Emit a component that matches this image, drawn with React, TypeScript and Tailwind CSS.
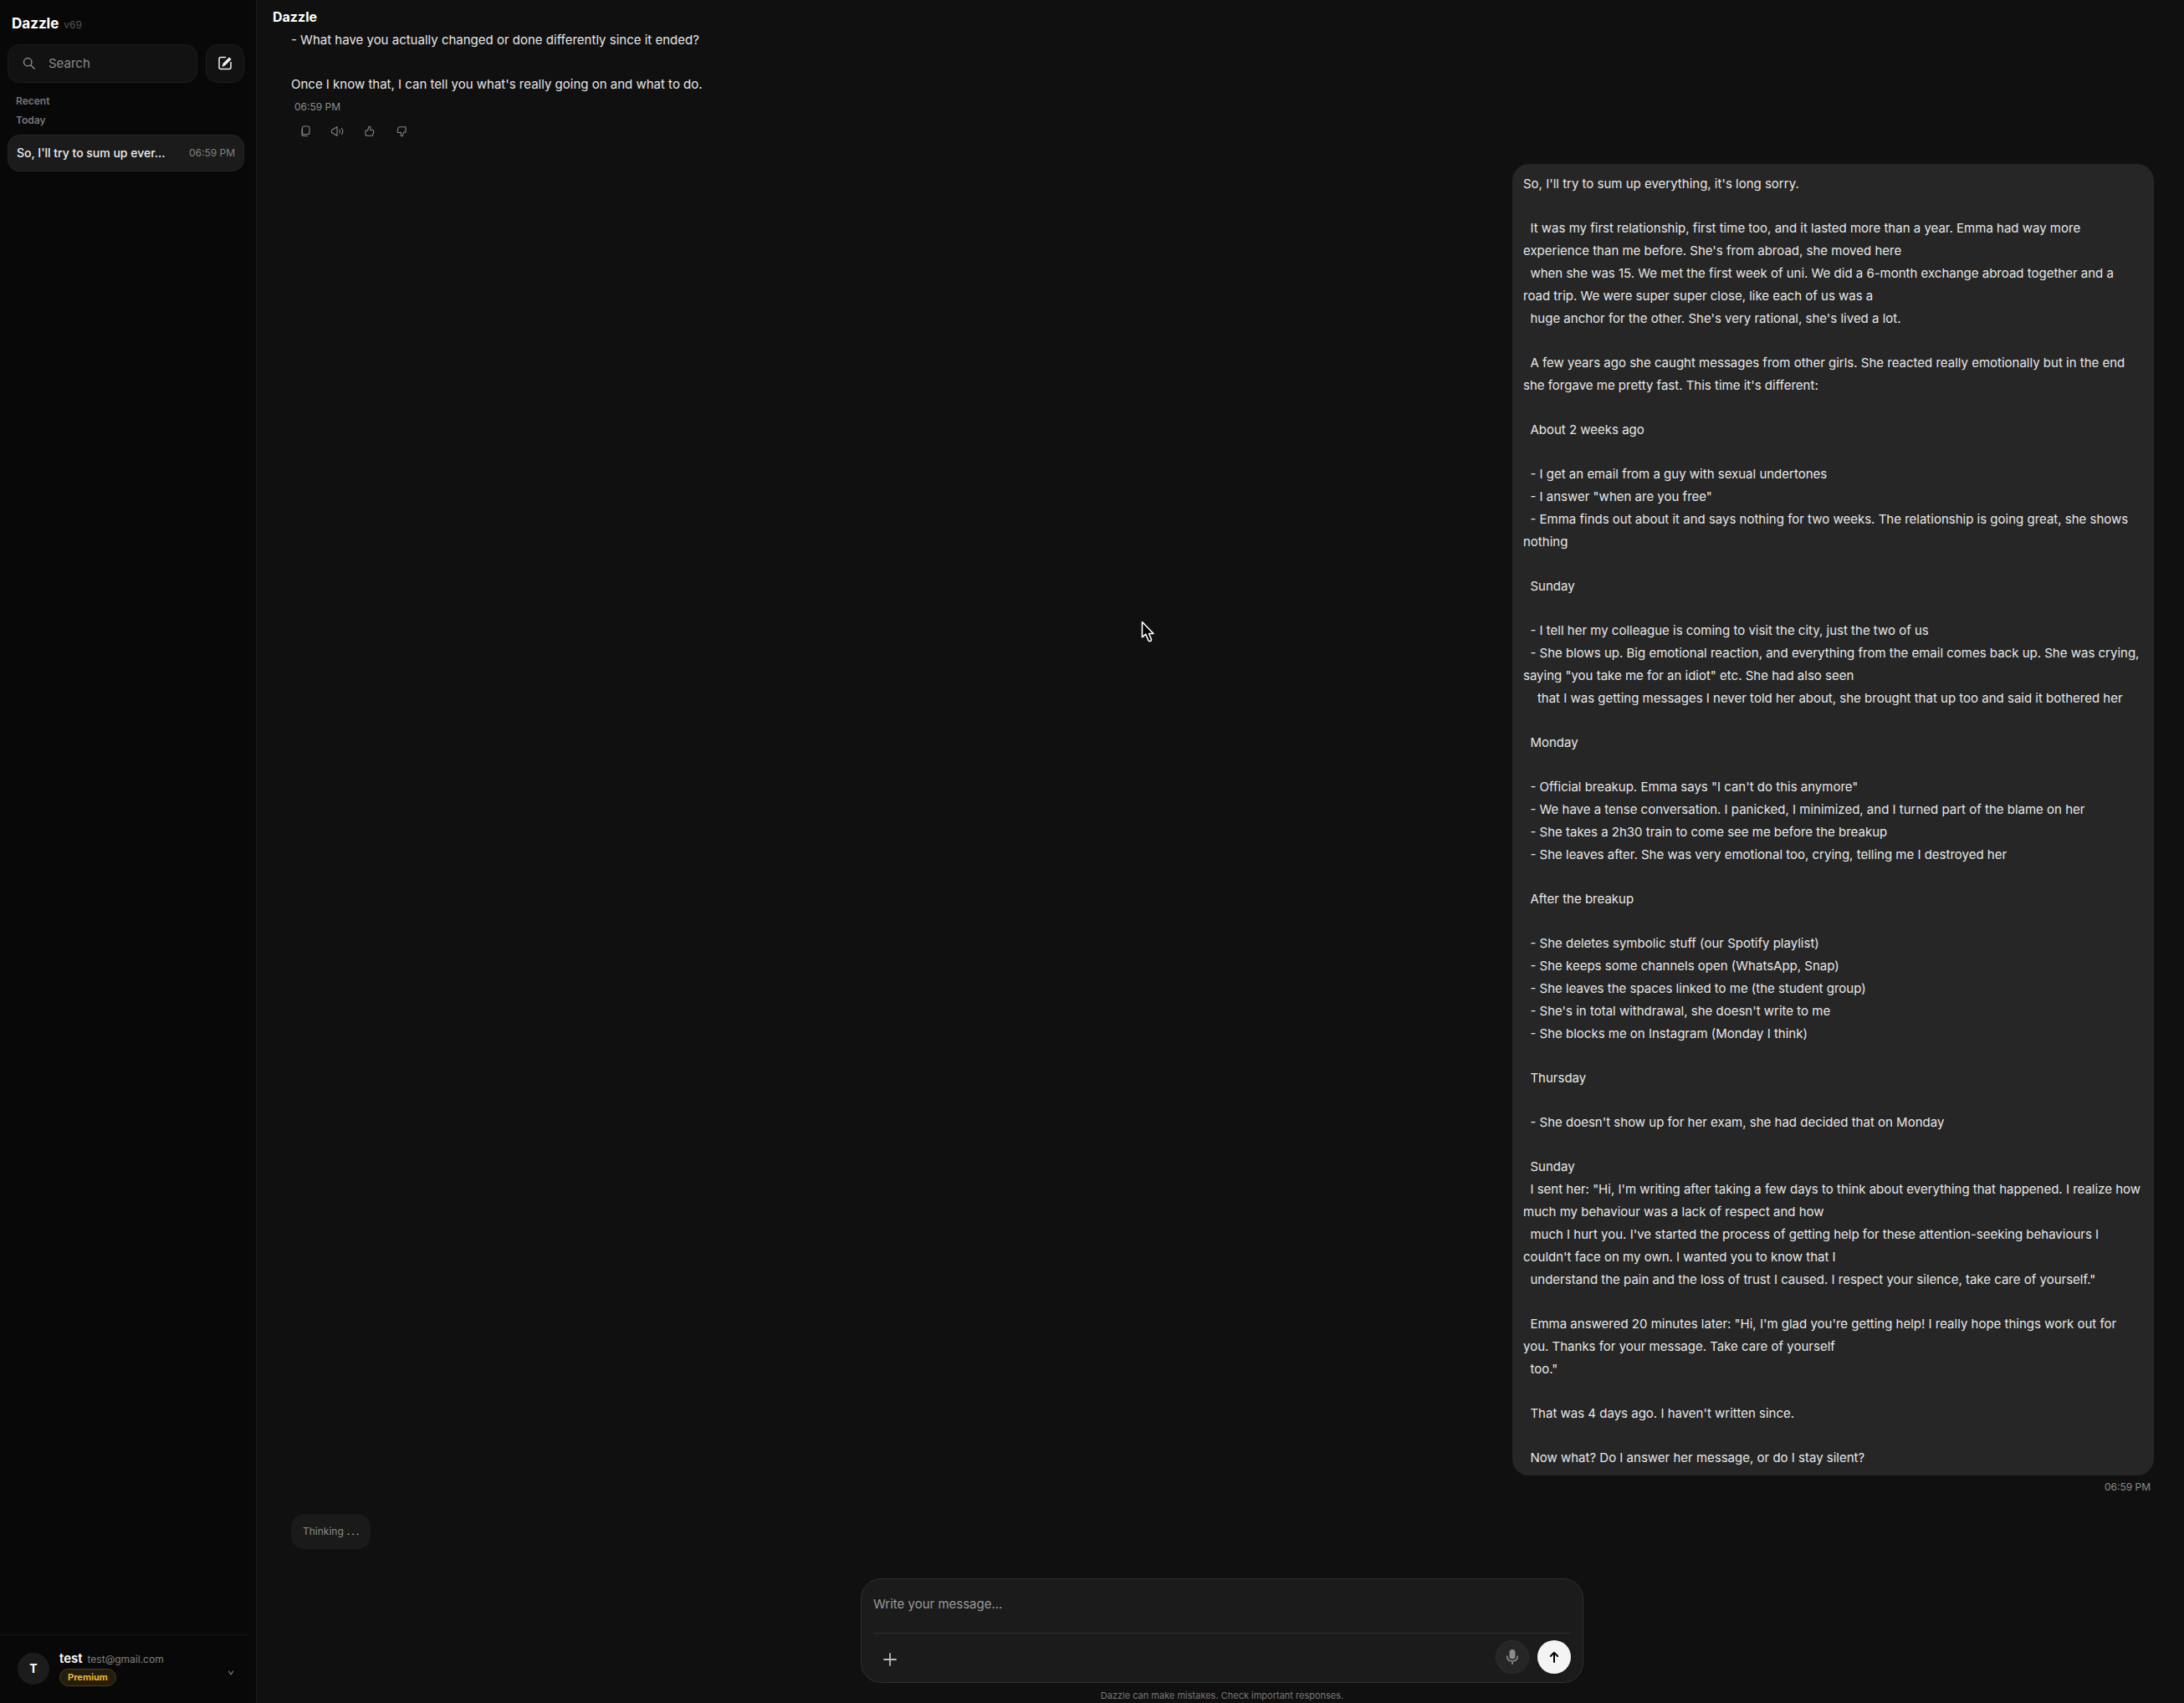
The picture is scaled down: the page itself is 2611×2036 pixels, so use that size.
import React, { useState } from 'react';

const messageBlocks = [
  `So, I'll try to sum up everything, it's long sorry.`,
  `  It was my first relationship, first time too, and it lasted more than a year. Emma had way more experience than me before. She's from abroad, she moved here
  when she was 15. We met the first week of uni. We did a 6-month exchange abroad together and a road trip. We were super super close, like each of us was a
  huge anchor for the other. She's very rational, she's lived a lot.`,
  `  A few years ago she caught messages from other girls. She reacted really emotionally but in the end she forgave me pretty fast. This time it's different:`,
  `  About 2 weeks ago`,
  `  - I get an email from a guy with sexual undertones
  - I answer "when are you free"
  - Emma finds out about it and says nothing for two weeks. The relationship is going great, she shows nothing`,
  `  Sunday`,
  `  - I tell her my colleague is coming to visit the city, just the two of us
  - She blows up. Big emotional reaction, and everything from the email comes back up. She was crying, saying "you take me for an idiot" etc. She had also seen
    that I was getting messages I never told her about, she brought that up too and said it bothered her`,
  `  Monday`,
  `  - Official breakup. Emma says "I can't do this anymore"
  - We have a tense conversation. I panicked, I minimized, and I turned part of the blame on her
  - She takes a 2h30 train to come see me before the breakup
  - She leaves after. She was very emotional too, crying, telling me I destroyed her`,
  `  After the breakup`,
  `  - She deletes symbolic stuff (our Spotify playlist)
  - She keeps some channels open (WhatsApp, Snap)
  - She leaves the spaces linked to me (the student group)
  - She's in total withdrawal, she doesn't write to me
  - She blocks me on Instagram (Monday I think)`,
  `  Thursday`,
  `  - She doesn't show up for her exam, she had decided that on Monday`,
  `  Sunday
  I sent her: "Hi, I'm writing after taking a few days to think about everything that happened. I realize how much my behaviour was a lack of respect and how
  much I hurt you. I've started the process of getting help for these attention-seeking behaviours I couldn't face on my own. I wanted you to know that I
  understand the pain and the loss of trust I caused. I respect your silence, take care of yourself."`,
  `  Emma answered 20 minutes later: "Hi, I'm glad you're getting help! I really hope things work out for you. Thanks for your message. Take care of yourself
  too."`,
  `  That was 4 days ago. I haven't written since.`,
  `  Now what? Do I answer her message, or do I stay silent?`,
];

const Sidebar = () => {
  return (
    <aside className="flex w-[307px] shrink-0 flex-col border-r border-[#1c1c1c] bg-[#080808]">
      <div className="flex items-baseline gap-1.5 px-3.5 pt-4">
        <h1 className="text-[17px] leading-6 font-bold text-white">Dazzle</h1>
        <span className="text-xs text-[#555]">v69</span>
      </div>
      <div className="mt-[13px] flex gap-2.5 pr-3.5 pl-[9px]">
        <label className="flex h-[46px] min-w-0 flex-1 items-center gap-4 rounded-[14px] border border-[#1c1c1c] bg-[#121212] pl-4">
          <svg className="size-4 shrink-0 text-[#8a8a8a]" viewBox="0 0 16 16" fill="none" stroke="currentColor" strokeWidth="1.4" strokeLinecap="round">
            <circle cx="7.2" cy="6.2" r="4.7" />
            <path d="M10.8 9.8 15.2 14.2" />
          </svg>
          <input
            type="search"
            placeholder="Search"
            aria-label="Search"
            className="min-w-0 flex-1 bg-transparent text-[15px] text-white outline-none placeholder:text-[#8a8a8a]"
          />
        </label>
        <button aria-label="New chat" className="flex size-[46px] items-center justify-center rounded-[14px] border border-[#1c1c1c] bg-[#121212] text-[#f0f0f0]">
          <svg className="size-[18px]" viewBox="0 0 18 18" fill="none" stroke="currentColor" strokeWidth="1.5" strokeLinecap="round" strokeLinejoin="round">
            <path d="M9.500 1.500H4Q2 1.500 2 3.500V13.500Q2 15.500 4 15.500H14Q16 15.500 16 13.500V7.500" />
            <path d="M6 12 6.800 9 14 1.800 16.200 3.800 9 11Z" fill="currentColor" strokeWidth="0.8" />
          </svg>
        </button>
      </div>
      <div className="mt-2.5 px-[19px] text-xs leading-[23px] font-semibold text-[#777]">
        <h2>Recent</h2>
        <h3>Today</h3>
      </div>
      <nav className="mt-1.5 pr-3.5 pl-[9px]">
        <a href="#chat" className="flex h-11 items-center justify-between rounded-[14px] border border-[#242424] bg-[#1b1b1b] px-2.5 whitespace-nowrap">
          <span className="text-sm font-medium text-[#eee]">So, I'll try to sum up ever...</span>
          <span className="text-xs text-[#808080]">06:59 PM</span>
        </a>
      </nav>
      <div className="mt-auto mr-2.5 flex items-center gap-3 border-t border-[#161616] pt-[18px] pr-4 pb-5 pl-[21px]">
        <div className="flex size-[38px] items-center justify-center rounded-full bg-[#1c1c1c] text-sm font-bold text-white">T</div>
        <div className="flex flex-1 flex-col items-start gap-px">
          <div className="flex items-baseline gap-1.5">
            <span className="text-[15px] leading-5 font-semibold text-white">test</span>
            <span className="text-xs leading-5 text-[#808080]">test@gmail.com</span>
          </div>
          <span className="rounded-full border border-[#4a3c12] bg-[#231d0d] px-[9px] text-[11px] leading-[19px] font-bold text-[#f0b52f]">Premium</span>
        </div>
        <button aria-label="Account menu" className="pt-2.5 text-[#888]">
          <svg className="size-2" viewBox="0 0 8 8" fill="none" stroke="currentColor" strokeWidth="1.1">
            <path d="M1.200 1.800 4 5.800 6.800 1.800" />
          </svg>
        </button>
      </div>
    </aside>
  );
};

const actions = [
  {
    label: 'Copy',
    path: 'M7 3H12Q14 3 14 5V10.500Q14 12.500 12 12.500H7Q5.500 12.500 5.500 10.500V5Q5.500 3 7 3ZM5 6V12.500Q5 14.500 7 14.500H11.500',
  },
  {
    label: 'Read aloud',
    path: 'M2.500 7.500 9 3.800V14.200L2.500 10.500ZM12 7Q13.200 9 12 11M14.500 5.500Q17.200 9 14.500 12.500',
  },
  {
    label: 'Good response',
    path: 'M5 8H7.500L9.200 3.200Q11.500 3 11 5.500L10.600 7.500H13.500Q15 7.500 14.700 9L14 12.800Q13.700 14.200 12.500 14.200H7Q5 14.200 5 12.200Z',
  },
  {
    label: 'Bad response',
    path: 'M15 4V10H12.800L11 14.700Q8.800 15 9.200 12.500L9.600 10.500H6.500Q5 10.500 5.300 9L6 5.200Q6.300 3.800 7.500 3.800H15',
  },
];

const MessageActions = () => {
  return (
    <div className="mt-3 flex gap-5 pl-2 text-[#858585]">
      {actions.map((action) => (
        <button key={action.label} aria-label={action.label}>
          <svg className="size-[18px]" viewBox="0 0 18 18" fill="none" stroke="currentColor" strokeWidth="1.1" strokeLinecap="round" strokeLinejoin="round">
            <path d={action.path} />
          </svg>
        </button>
      ))}
    </div>
  );
};

const Composer = () => {
  const [text, setText] = useState('');

  return (
    <form
      className="mx-auto w-full max-w-[864px] rounded-[24px] border border-[#303030] bg-[#1b1b1b] px-3.5"
      onSubmit={(e) => e.preventDefault()}
    >
      <textarea
        aria-label="Write your message"
        placeholder="Write your message..."
        value={text}
        onChange={(e) => setText(e.target.value)}
        className="block h-16 w-full resize-none bg-transparent pt-[18px] text-[15px] leading-6 text-white outline-none placeholder:text-[#9a9a9a]"
      />
      <div className="flex h-[59px] items-center gap-2.5 border-t border-[#2e2e2e] pb-0.5">
        <button type="button" aria-label="Add attachment" className="mt-1.5 mr-auto ml-3 text-[#bbb]">
          <svg className="size-4" viewBox="0 0 16 16" fill="none" stroke="currentColor" strokeWidth="1.8" strokeLinecap="round">
            <path d="M8 1V15M1 8H15" />
          </svg>
        </button>
        <button
          type="button"
          aria-label="Record voice"
          className="flex size-10 items-center justify-center rounded-full border border-[#303030] bg-[#262626] text-[#8c8c8c]"
        >
          <svg className="size-5" viewBox="0 0 20 20" fill="none" stroke="currentColor" strokeWidth="1.6">
            <rect x="6.500" y="1" width="7" height="11.500" rx="3.500" fill="currentColor" stroke="none" />
            <path d="M3.700 8.500Q3.700 15 10 15T16.300 8.500M10 15V19" />
          </svg>
        </button>
        <button aria-label="Send" className="flex size-10 items-center justify-center rounded-full bg-[#f4f4f4] text-black">
          <svg className="size-4" viewBox="0 0 16 16" fill="none" stroke="currentColor" strokeWidth="2" strokeLinecap="round" strokeLinejoin="round">
            <path d="M8 14V3M3.800 7 8 2.800 12.200 7" />
          </svg>
        </button>
      </div>
    </form>
  );
};

export default function App() {
  return (
    <div className="relative flex h-screen bg-[#101010] font-[Inter,sans-serif] text-[#e6e6e6]">
      <Sidebar />
      <main className="flex min-w-0 flex-1 flex-col">
        <header className="px-[19px] pt-2 pb-0.5 text-base leading-6 font-bold text-white">Dazzle</header>
        <div className="min-h-0 flex-1 overflow-hidden pr-9 pl-[41px] text-[15px]">
          <p className="leading-[27px]">- What have you actually changed or done differently since it ended?</p>
          <p className="mt-[26px] leading-[27px]">Once I know that, I can tell you what's really going on and what to do.</p>
          <p className="mt-1.5 pl-1 text-xs text-[#8c8c8c]">06:59 PM</p>
          <MessageActions />
          <div className="mt-[30px] ml-auto max-w-[767px] space-y-[26px] rounded-[20px] bg-[#262626] px-[13px] pt-2.5 pb-2 leading-[27px] whitespace-pre-wrap">
            {messageBlocks.map((block, i) => (
              <p key={i}>{block}</p>
            ))}
          </div>
          <p className="mt-1.5 pr-1 text-right text-xs text-[#8c8c8c]">06:59 PM</p>
          <div className="mt-6 flex">
            <p className="flex gap-1 rounded-[16px] bg-[#1a1a1a] px-3.5 text-xs leading-[42px] text-[#8c8c8c]">
              Thinking
              <span className="flex gap-0.5 text-[#c4c4c4]">
                <span>.</span>
                <span>.</span>
                <span>.</span>
              </span>
            </p>
          </div>
        </div>
        <div className="pl-1">
          <Composer />
          <p className="mt-1.5 text-center text-[11px] leading-[18px] text-[#777]">Dazzle can make mistakes. Check important responses.</p>
        </div>
      </main>
      <svg className="pointer-events-none absolute top-[741px] left-[1363px] h-7 w-5" viewBox="0 0 20 28" fill="#000" stroke="#fff" strokeWidth="1.6" strokeLinejoin="round">
        <path d="M2.500 2.500V20.800L6.800 17.200 10 24.800Q11.500 26.200 13.300 24.800L13.500 23.500 10.600 16.500H16Z" />
      </svg>
    </div>
  );
}
